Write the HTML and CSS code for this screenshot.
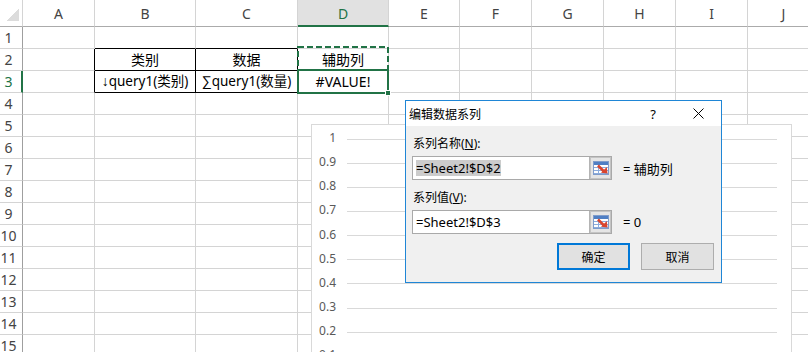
FILE: index.html
```html
<!DOCTYPE html>
<html>
<head>
<meta charset="utf-8">
<link rel="stylesheet" href="styles.css">
</head>
<body>
    <div class="sheet">
        <div class="row head">
            <div class="corner"></div>
            <div>A</div><div>B</div><div>C</div><div class="active">D</div><div>E</div><div>F</div><div>G</div><div>H</div><div>I</div><div>J</div>
        </div>
        <div class="row">
            <div class="rh">1</div>
            <div></div><div class="bb"></div><div class="bb"></div><div></div><div></div><div></div><div></div><div></div><div></div><div></div>
        </div>
        <div class="row">
            <div class="rh">2</div>
            <div class="br"></div><div class="br bb">类别</div><div class="br bb">数据</div><div>辅助列</div><div></div><div></div><div></div><div></div><div></div><div></div>
        </div>
        <div class="row">
            <div class="rh active">3</div>
            <div class="br"></div><div class="br bb fx"><span class="sym">↓</span>query1(类别)</div><div class="br bb fx"><span class="sym">∑</span>query1(数量)</div><div>#VALUE!</div><div></div><div></div><div></div><div></div><div></div><div></div>
        </div>
        <div class="row"><div class="rh">4</div><div></div><div></div><div></div><div></div><div></div><div></div><div></div><div></div><div></div><div></div></div>
        <div class="row"><div class="rh">5</div><div></div><div></div><div></div><div></div><div></div><div></div><div></div><div></div><div></div><div></div></div>
        <div class="row"><div class="rh">6</div><div></div><div></div><div></div><div></div><div></div><div></div><div></div><div></div><div></div><div></div></div>
        <div class="row"><div class="rh">7</div><div></div><div></div><div></div><div></div><div></div><div></div><div></div><div></div><div></div><div></div></div>
        <div class="row"><div class="rh">8</div><div></div><div></div><div></div><div></div><div></div><div></div><div></div><div></div><div></div><div></div></div>
        <div class="row"><div class="rh">9</div><div></div><div></div><div></div><div></div><div></div><div></div><div></div><div></div><div></div><div></div></div>
        <div class="row"><div class="rh">10</div><div></div><div></div><div></div><div></div><div></div><div></div><div></div><div></div><div></div><div></div></div>
        <div class="row"><div class="rh">11</div><div></div><div></div><div></div><div></div><div></div><div></div><div></div><div></div><div></div><div></div></div>
        <div class="row"><div class="rh">12</div><div></div><div></div><div></div><div></div><div></div><div></div><div></div><div></div><div></div><div></div></div>
        <div class="row"><div class="rh">13</div><div></div><div></div><div></div><div></div><div></div><div></div><div></div><div></div><div></div><div></div></div>
        <div class="row"><div class="rh">14</div><div></div><div></div><div></div><div></div><div></div><div></div><div></div><div></div><div></div><div></div></div>
        <div class="row"><div class="rh">15</div><div></div><div></div><div></div><div></div><div></div><div></div><div></div><div></div><div></div><div></div></div>

        <!-- copy marquee on D2 and the active cell D3 -->
        <svg class="marquee" width="92" height="25" viewBox="0 0 92 25">
            <rect x="1" y="1" width="90" height="23" fill="none" stroke="#217346" stroke-width="2" stroke-dasharray="6 3"/>
        </svg>
        <div class="selection"><span class="handle"></span></div>

        <div class="chart">
            <div class="tick"><span>1</span><i></i></div>
            <div class="tick"><span>0.9</span><i></i></div>
            <div class="tick"><span>0.8</span><i></i></div>
            <div class="tick"><span>0.7</span><i></i></div>
            <div class="tick"><span>0.6</span><i></i></div>
            <div class="tick"><span>0.5</span><i></i></div>
            <div class="tick"><span>0.4</span><i></i></div>
            <div class="tick"><span>0.3</span><i></i></div>
            <div class="tick"><span>0.2</span><i></i></div>
            <div class="tick"><span>0.1</span><i></i></div>
        </div>

        <div class="dialog">
            <div class="titlebar">
                <span class="title">编辑数据系列</span>
                <span class="help">?</span>
                <span class="close">
                    <svg width="11" height="11" viewBox="0 0 11 11"><path d="M0.5 0.5L10.5 10.5M10.5 0.5L0.5 10.5" stroke="#000" stroke-width="1"/></svg>
                </span>
            </div>
            <div class="dialog-body">
                <div class="label">系列名称(<u>N</u>):</div>
                <div class="field-row">
                    <div class="field">
                        <span class="text"><span class="selected">=Sheet2!$D$2</span></span>
                        <span class="pick">
                            <svg width="16" height="14" viewBox="0 0 16 14">
                                <rect x="0.5" y="0.5" width="15" height="13" fill="#fff" stroke="#7f9ccb"/>
                                <rect x="1" y="1" width="14" height="3" fill="#4f7fc4"/>
                                <path d="M1 6.5h14M1 9.5h14M1 12.5h14M5.5 4v9" stroke="#8cacdc"/>
                                <path d="M5 4.5l6 6" stroke="#d8452f" stroke-width="2.6"/>
                                <path d="M14.5 12.5L8 11.8L13.8 6Z" fill="#d8452f"/>
                            </svg>
                        </span>
                    </div>
                    <span class="value">= 辅助列</span>
                </div>
                <div class="label second">系列值(<u>V</u>):</div>
                <div class="field-row">
                    <div class="field">
                        <span class="text">=Sheet2!$D$3</span>
                        <span class="pick">
                            <svg width="16" height="14" viewBox="0 0 16 14">
                                <rect x="0.5" y="0.5" width="15" height="13" fill="#fff" stroke="#7f9ccb"/>
                                <rect x="1" y="1" width="14" height="3" fill="#4f7fc4"/>
                                <path d="M1 6.5h14M1 9.5h14M1 12.5h14M5.5 4v9" stroke="#8cacdc"/>
                                <path d="M5 4.5l6 6" stroke="#d8452f" stroke-width="2.6"/>
                                <path d="M14.5 12.5L8 11.8L13.8 6Z" fill="#d8452f"/>
                            </svg>
                        </span>
                    </div>
                    <span class="value">= 0</span>
                </div>
                <div class="buttons">
                    <button class="primary">确定</button>
                    <button>取消</button>
                </div>
            </div>
        </div>
    </div>
</body>
</html>
```

FILE: styles.css
```css
* {
    box-sizing: border-box;
}

body {
    margin: 0;
    font-family: "Noto Sans", "Noto Sans CJK SC", sans-serif;
    background-color: #fff;
    overflow: hidden;
}

.sheet {
    position: relative;
    width: 808px;
    height: 352px;
    overflow: hidden;
}

.row {
    display: grid;
    grid-template-columns: 23px 72px 101px 102px 91px 71px 72px 72px 72px 72px 72px;
    height: 22px;
}

.row > div {
    border-right: 1px solid #d4d4d4;
    border-bottom: 1px solid #d4d4d4;
    font-size: 14px;
    line-height: 21px;
    text-align: center;
    white-space: nowrap;
    overflow: hidden;
    color: #000;
}

.row > .fx {
    font-size: 13.5px;
}

.row > div .sym {
    font-family: "Liberation Sans", sans-serif;
    font-size: 14px;
}

.row > .rh {
    border-right-color: #9f9f9f;
    padding-right: 5px;
    color: #444;
    overflow: visible;
}

.row > .rh.active {
    border-right: 2px solid #217346;
    padding-right: 4px;
    color: #217346;
}

.row > .br {
    border-right-color: #000;
}

.row > .bb {
    border-bottom-color: #000;
}

.head {
    height: 27px;
}

.head > div {
    border-bottom-color: #ababab;
    line-height: 27px;
    color: #444;
}

.head > .active {
    background-color: #e1e1e1;
    border-bottom: 2px solid #217346;
    color: #217346;
}

.head > .corner {
    border-right-color: #d4d4d4;
    background: linear-gradient(135deg, transparent 50%, #dcdcdc 50%) no-repeat;
    background-size: 13px 13px;
    background-position: right 3px bottom 5px;
}

.marquee {
    position: absolute;
    left: 297px;
    top: 46px;
}

.selection {
    position: absolute;
    left: 297px;
    top: 69px;
    width: 92px;
    height: 25px;
    border: 2px solid #217346;
}

.handle {
    position: absolute;
    right: -4px;
    bottom: -4px;
    width: 6px;
    height: 6px;
    background-color: #217346;
    border: 1px solid #fff;
}

.chart {
    position: absolute;
    left: 311px;
    top: 124px;
    width: 481px;
    height: 260px;
    background-color: #fff;
    border: 1px solid #d9d9d9;
    padding-top: 2px;
}

.tick {
    display: flex;
    align-items: center;
    height: 24.15px;
}

.tick span {
    width: 24px;
    text-align: right;
    font-size: 12px;
    line-height: 14px;
    margin-top: -2px;
    color: #595959;
}

.tick i {
    display: block;
    width: 430px;
    height: 1px;
    margin-left: 11px;
    background-color: #d9d9d9;
}

.dialog {
    position: absolute;
    left: 405px;
    top: 100px;
    width: 317px;
    height: 183px;
    border: 1px solid #1f86d6;
    background-color: #f0f0f0;
    font-size: 12px;
    color: #000;
}

.titlebar {
    display: flex;
    align-items: center;
    height: 25px;
    background-color: #fff;
    padding-left: 3px;
}

.title {
    flex: 1;
    font-size: 12px;
}

.help {
    width: 14px;
    margin-right: 15px;
    text-align: center;
    font-size: 13px;
}

.close {
    display: flex;
    align-items: center;
    justify-content: center;
    width: 46px;
    height: 25px;
}

.dialog-body {
    padding: 0 7px 0 6px;
}

.label {
    margin-top: 10px;
    padding-left: 1px;
    line-height: 16px;
}

.label.second {
    margin-top: 10px;
}

.field-row {
    display: flex;
    align-items: center;
    margin-top: 4px;
}

.field {
    display: flex;
    width: 200px;
    height: 24px;
    border: 1px solid #a9a9a9;
    background-color: #fff;
}

.field .text {
    flex: 1;
    padding-left: 3px;
    font-size: 13px;
    line-height: 22px;
    display: flex;
    align-items: center;
}

.selected {
    background-color: #cccccc;
    line-height: 16px;
}

.pick {
    display: flex;
    align-items: center;
    justify-content: center;
    width: 22px;
    background-color: #e5e5e5;
    border-left: 1px solid #b4b4b4;
    box-shadow: inset 0 0 0 1px #c4c4c4;
}

.value {
    margin-left: 11px;
    font-size: 13px;
}

.buttons {
    display: flex;
    justify-content: flex-end;
    gap: 11px;
    margin-top: 9px;
}

button {
    width: 73px;
    height: 27px;
    padding: 0;
    font-family: inherit;
    font-size: 12px;
    color: #000;
    background-color: #e1e1e1;
    border: 1px solid #adadad;
}

button.primary {
    border: 2px solid #0078d7;
}
```
